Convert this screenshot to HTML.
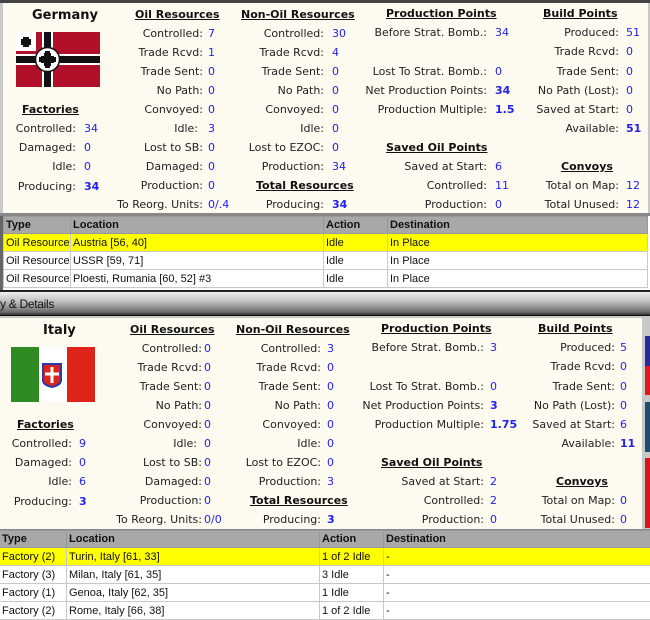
<!DOCTYPE html>
<html><head><meta charset="utf-8"><style>
*{margin:0;padding:0;box-sizing:border-box}
body{width:650px;height:620px;overflow:hidden;background:#c8c8c8;font-family:"DejaVu Sans",Verdana,sans-serif;font-size:11px;color:#222;position:relative}
.p{position:absolute;background:#fdfaf0}
.a{position:absolute;white-space:nowrap;line-height:14px}
.l{text-align:right}
.v{color:#2222ee}
.b{font-weight:bold}
.h{font-weight:bold;text-decoration:underline;color:#111;font-size:11px}
.t{font-weight:bold;font-size:13px;color:#111}
table{position:absolute;border-collapse:collapse;table-layout:fixed;font-family:"Liberation Sans",Arial,sans-serif;font-size:11px;background:#fff}
td{border:1px solid #c8c8c8;height:18px;padding:0 2px;white-space:nowrap;overflow:hidden;color:#111}
tr.hd td{background:#a8a8a8;font-weight:bold;border-color:#999;height:17px}
tr.y td{background:#ffff00}
</style></head><body>
<div style="position:absolute;left:0;top:0;width:650px;height:3px;background:#444"></div>
<div class="p" style="left:3px;top:3px;width:645px;height:210px"></div>

<div class="a t" style="left:32px;top:9px">Germany</div>
<svg style="position:absolute;left:16px;top:32px" width="84" height="55" viewBox="0 0 84 55">
<rect width="84" height="55" fill="#b0102a"/>
<rect x="0" y="22" width="84" height="11" fill="#fff"/><rect x="26" y="0" width="11" height="55" fill="#fff"/>
<rect x="0" y="24" width="84" height="7" fill="#111"/><rect x="28" y="0" width="7" height="55" fill="#111"/>
<rect x="0" y="0" width="20" height="19" fill="#fff"/>
<path d="M4 4h12v12H4z" fill="#fff"/><path d="M5 7h10v6H5zM7 5h6v10H7z" fill="#111"/>
<circle cx="31.5" cy="27.5" r="12" fill="#fff" stroke="#111" stroke-width="1.5"/>
<path d="M25 24h13v7H25zM28 21h7v13h-7z" fill="#111"/><path d="M23 25h17v5H23zM29 19h5v17h-5z" fill="#111"/>
</svg>
<div class="a h" style="left:22px;top:103px">Factories</div>
<div class="a l" style="right:574px;top:122px">Controlled:</div><div class="a v" style="left:84px;top:122px">34</div>
<div class="a l" style="right:574px;top:141px">Damaged:</div><div class="a v" style="left:84px;top:141px">0</div>
<div class="a l" style="right:574px;top:160px">Idle:</div><div class="a v" style="left:84px;top:160px">0</div>
<div class="a l" style="right:574px;top:180px">Producing:</div><div class="a v b" style="left:84px;top:180px">34</div>

<div class="a h" style="left:135px;top:8px">Oil Resources</div>
<div class="a l" style="right:447px;top:27px">Controlled:</div><div class="a v" style="left:208px;top:27px">7</div>
<div class="a l" style="right:447px;top:46px">Trade Rcvd:</div><div class="a v" style="left:208px;top:46px">1</div>
<div class="a l" style="right:447px;top:65px">Trade Sent:</div><div class="a v" style="left:208px;top:65px">0</div>
<div class="a l" style="right:447px;top:84px">No Path:</div><div class="a v" style="left:208px;top:84px">0</div>
<div class="a l" style="right:447px;top:103px">Convoyed:</div><div class="a v" style="left:208px;top:103px">0</div>
<div class="a l" style="right:452px;top:122px">Idle:</div><div class="a v" style="left:208px;top:122px">3</div>
<div class="a l" style="right:447px;top:141px">Lost to SB:</div><div class="a v" style="left:208px;top:141px">0</div>
<div class="a l" style="right:447px;top:160px">Damaged:</div><div class="a v" style="left:208px;top:160px">0</div>
<div class="a l" style="right:447px;top:179px">Production:</div><div class="a v" style="left:208px;top:179px">0</div>
<div class="a l" style="right:447px;top:198px">To Reorg. Units:</div><div class="a v" style="left:208px;top:198px">0/.4</div>

<div class="a h" style="left:241px;top:8px">Non-Oil Resources</div>
<div class="a l" style="right:326px;top:27px">Controlled:</div><div class="a v" style="left:332px;top:27px">30</div>
<div class="a l" style="right:326px;top:46px">Trade Rcvd:</div><div class="a v" style="left:332px;top:46px">4</div>
<div class="a l" style="right:326px;top:65px">Trade Sent:</div><div class="a v" style="left:332px;top:65px">0</div>
<div class="a l" style="right:326px;top:84px">No Path:</div><div class="a v" style="left:332px;top:84px">0</div>
<div class="a l" style="right:326px;top:103px">Convoyed:</div><div class="a v" style="left:332px;top:103px">0</div>
<div class="a l" style="right:326px;top:122px">Idle:</div><div class="a v" style="left:332px;top:122px">0</div>
<div class="a l" style="right:326px;top:141px">Lost to EZOC:</div><div class="a v" style="left:332px;top:141px">0</div>
<div class="a l" style="right:326px;top:160px">Production:</div><div class="a v" style="left:332px;top:160px">34</div>
<div class="a h" style="left:256px;top:179px">Total Resources</div>
<div class="a l" style="right:326px;top:198px">Producing:</div><div class="a v b" style="left:332px;top:198px">34</div>

<div class="a h" style="left:386px;top:7px">Production Points</div>
<div class="a l" style="right:163px;top:26px">Before Strat. Bomb.:</div><div class="a v" style="left:495px;top:26px">34</div>
<div class="a l" style="right:163px;top:65px">Lost To Strat. Bomb.:</div><div class="a v" style="left:495px;top:65px">0</div>
<div class="a l" style="right:163px;top:84px">Net Production Points:</div><div class="a v b" style="left:495px;top:84px">34</div>
<div class="a l" style="right:163px;top:103px">Production Multiple:</div><div class="a v b" style="left:495px;top:103px">1.5</div>
<div class="a h" style="left:386px;top:141px">Saved Oil Points</div>
<div class="a l" style="right:163px;top:160px">Saved at Start:</div><div class="a v" style="left:495px;top:160px">6</div>
<div class="a l" style="right:163px;top:179px">Controlled:</div><div class="a v" style="left:495px;top:179px">11</div>
<div class="a l" style="right:163px;top:198px">Production:</div><div class="a v" style="left:495px;top:198px">0</div>

<div class="a h" style="left:543px;top:7px">Build Points</div>
<div class="a l" style="right:31px;top:26px">Produced:</div><div class="a v" style="left:626px;top:26px">51</div>
<div class="a l" style="right:31px;top:45px">Trade Rcvd:</div><div class="a v" style="left:626px;top:45px">0</div>
<div class="a l" style="right:31px;top:65px">Trade Sent:</div><div class="a v" style="left:626px;top:65px">0</div>
<div class="a l" style="right:31px;top:84px">No Path (Lost):</div><div class="a v" style="left:626px;top:84px">0</div>
<div class="a l" style="right:31px;top:103px">Saved at Start:</div><div class="a v" style="left:626px;top:103px">0</div>
<div class="a l" style="right:31px;top:122px">Available:</div><div class="a v b" style="left:626px;top:122px">51</div>
<div class="a h" style="left:561px;top:160px">Convoys</div>
<div class="a l" style="right:31px;top:179px">Total on Map:</div><div class="a v" style="left:626px;top:179px">12</div>
<div class="a l" style="right:31px;top:198px">Total Unused:</div><div class="a v" style="left:626px;top:198px">12</div>

<div style="position:absolute;left:0;top:213px;width:650px;height:3px;background:#888"></div>
<div style="position:absolute;left:0;top:216px;width:650px;height:74px;background:#fff;border-left:3px solid #666"></div>
<table style="left:3px;top:216px;width:645px">
<colgroup><col style="width:67px"><col style="width:253px"><col style="width:64px"><col></colgroup>
<tr class="hd"><td>Type</td><td>Location</td><td>Action</td><td>Destination</td></tr>
<tr class="y"><td>Oil Resource</td><td>Austria [56, 40]</td><td>Idle</td><td>In Place</td></tr>
<tr><td>Oil Resource</td><td>USSR [59, 71]</td><td>Idle</td><td>In Place</td></tr>
<tr><td>Oil Resource</td><td>Ploesti, Rumania [60, 52] #3</td><td>Idle</td><td>In Place</td></tr>
</table>
<div style="position:absolute;left:0;top:290px;width:650px;height:2px;background:#222"></div>
<div style="position:absolute;left:0;top:292px;width:650px;height:24px;background:linear-gradient(#f0f0f0,#c0c0c0 40%,#707070 85%,#333);border-bottom:1px solid #111;font-family:'Liberation Sans',Arial,sans-serif;font-size:12px;line-height:24px;color:#111;letter-spacing:-0.3px">y &amp; Details</div>

<div class="p" style="left:0;top:318px;width:642px;height:211px"></div>
<div style="position:absolute;left:645px;top:336px;width:5px;height:30px;background:#2a2aa0"></div>
<div style="position:absolute;left:645px;top:366px;width:5px;height:29px;background:#e01818"></div>
<div style="position:absolute;left:645px;top:402px;width:5px;height:50px;background:#1e4e6e"></div>
<div style="position:absolute;left:645px;top:458px;width:5px;height:70px;background:#d81818"></div>

<div class="a t" style="left:43px;top:324px">Italy</div>
<svg style="position:absolute;left:11px;top:347px" width="84" height="55" viewBox="0 0 84 55">
<rect width="28" height="55" fill="#2e8b24"/><rect x="28" width="28" height="55" fill="#fff"/><rect x="56" width="28" height="55" fill="#dd2418"/>
<path d="M31 16h20v17q0 6-10 8q-10-2-10-8z" fill="#2a3aa8"/>
<path d="M33 18h16v15q0 4-8 6q-8-2-8-6z" fill="#dd2418"/>
<rect x="39.5" y="20" width="3" height="16" fill="#fff"/><rect x="34" y="25.5" width="14" height="3" fill="#fff"/>
</svg>
<div class="a h" style="left:17px;top:418px">Factories</div>
<div class="a l" style="right:578px;top:437px">Controlled:</div><div class="a v" style="left:79px;top:437px">9</div>
<div class="a l" style="right:578px;top:456px">Damaged:</div><div class="a v" style="left:79px;top:456px">0</div>
<div class="a l" style="right:578px;top:475px">Idle:</div><div class="a v" style="left:79px;top:475px">6</div>
<div class="a l" style="right:578px;top:495px">Producing:</div><div class="a v b" style="left:79px;top:495px">3</div>

<div class="a h" style="left:130px;top:323px">Oil Resources</div>
<div class="a l" style="right:448px;top:342px">Controlled:</div><div class="a v" style="left:204px;top:342px">0</div>
<div class="a l" style="right:448px;top:361px">Trade Rcvd:</div><div class="a v" style="left:204px;top:361px">0</div>
<div class="a l" style="right:448px;top:380px">Trade Sent:</div><div class="a v" style="left:204px;top:380px">0</div>
<div class="a l" style="right:448px;top:399px">No Path:</div><div class="a v" style="left:204px;top:399px">0</div>
<div class="a l" style="right:448px;top:418px">Convoyed:</div><div class="a v" style="left:204px;top:418px">0</div>
<div class="a l" style="right:453px;top:437px">Idle:</div><div class="a v" style="left:204px;top:437px">0</div>
<div class="a l" style="right:448px;top:456px">Lost to SB:</div><div class="a v" style="left:204px;top:456px">0</div>
<div class="a l" style="right:448px;top:475px">Damaged:</div><div class="a v" style="left:204px;top:475px">0</div>
<div class="a l" style="right:448px;top:494px">Production:</div><div class="a v" style="left:204px;top:494px">0</div>
<div class="a l" style="right:448px;top:513px">To Reorg. Units:</div><div class="a v" style="left:204px;top:513px">0/0</div>

<div class="a h" style="left:236px;top:323px">Non-Oil Resources</div>
<div class="a l" style="right:329px;top:342px">Controlled:</div><div class="a v" style="left:327px;top:342px">3</div>
<div class="a l" style="right:329px;top:361px">Trade Rcvd:</div><div class="a v" style="left:327px;top:361px">0</div>
<div class="a l" style="right:329px;top:380px">Trade Sent:</div><div class="a v" style="left:327px;top:380px">0</div>
<div class="a l" style="right:329px;top:399px">No Path:</div><div class="a v" style="left:327px;top:399px">0</div>
<div class="a l" style="right:329px;top:418px">Convoyed:</div><div class="a v" style="left:327px;top:418px">0</div>
<div class="a l" style="right:329px;top:437px">Idle:</div><div class="a v" style="left:327px;top:437px">0</div>
<div class="a l" style="right:329px;top:456px">Lost to EZOC:</div><div class="a v" style="left:327px;top:456px">0</div>
<div class="a l" style="right:329px;top:475px">Production:</div><div class="a v" style="left:327px;top:475px">3</div>
<div class="a h" style="left:250px;top:494px">Total Resources</div>
<div class="a l" style="right:329px;top:513px">Producing:</div><div class="a v b" style="left:327px;top:513px">3</div>

<div class="a h" style="left:381px;top:322px">Production Points</div>
<div class="a l" style="right:166px;top:341px">Before Strat. Bomb.:</div><div class="a v" style="left:490px;top:341px">3</div>
<div class="a l" style="right:166px;top:380px">Lost To Strat. Bomb.:</div><div class="a v" style="left:490px;top:380px">0</div>
<div class="a l" style="right:166px;top:399px">Net Production Points:</div><div class="a v b" style="left:490px;top:399px">3</div>
<div class="a l" style="right:166px;top:418px">Production Multiple:</div><div class="a v b" style="left:490px;top:418px">1.75</div>
<div class="a h" style="left:381px;top:456px">Saved Oil Points</div>
<div class="a l" style="right:166px;top:475px">Saved at Start:</div><div class="a v" style="left:490px;top:475px">2</div>
<div class="a l" style="right:166px;top:494px">Controlled:</div><div class="a v" style="left:490px;top:494px">2</div>
<div class="a l" style="right:166px;top:513px">Production:</div><div class="a v" style="left:490px;top:513px">0</div>

<div class="a h" style="left:538px;top:322px">Build Points</div>
<div class="a l" style="right:35px;top:341px">Produced:</div><div class="a v" style="left:620px;top:341px">5</div>
<div class="a l" style="right:35px;top:360px">Trade Rcvd:</div><div class="a v" style="left:620px;top:360px">0</div>
<div class="a l" style="right:35px;top:380px">Trade Sent:</div><div class="a v" style="left:620px;top:380px">0</div>
<div class="a l" style="right:35px;top:399px">No Path (Lost):</div><div class="a v" style="left:620px;top:399px">0</div>
<div class="a l" style="right:35px;top:418px">Saved at Start:</div><div class="a v" style="left:620px;top:418px">6</div>
<div class="a l" style="right:35px;top:437px">Available:</div><div class="a v b" style="left:620px;top:437px">11</div>
<div class="a h" style="left:556px;top:475px">Convoys</div>
<div class="a l" style="right:35px;top:494px">Total on Map:</div><div class="a v" style="left:620px;top:494px">0</div>
<div class="a l" style="right:35px;top:513px">Total Unused:</div><div class="a v" style="left:620px;top:513px">0</div>

<div style="position:absolute;left:0;top:529px;width:650px;height:2px;background:#888"></div>
<div style="position:absolute;left:0;top:531px;width:650px;height:89px;background:#fff"></div>
<table style="left:-1px;top:530px;width:652px">
<colgroup><col style="width:67px"><col style="width:253px"><col style="width:64px"><col></colgroup>
<tr class="hd"><td>Type</td><td>Location</td><td>Action</td><td>Destination</td></tr>
<tr class="y"><td>Factory (2)</td><td>Turin, Italy [61, 33]</td><td>1 of 2 Idle</td><td>-</td></tr>
<tr><td>Factory (3)</td><td>Milan, Italy [61, 35]</td><td>3 Idle</td><td>-</td></tr>
<tr><td>Factory (1)</td><td>Genoa, Italy [62, 35]</td><td>1 Idle</td><td>-</td></tr>
<tr><td>Factory (2)</td><td>Rome, Italy [66, 38]</td><td>1 of 2 Idle</td><td>-</td></tr>
</table>
</body></html>
